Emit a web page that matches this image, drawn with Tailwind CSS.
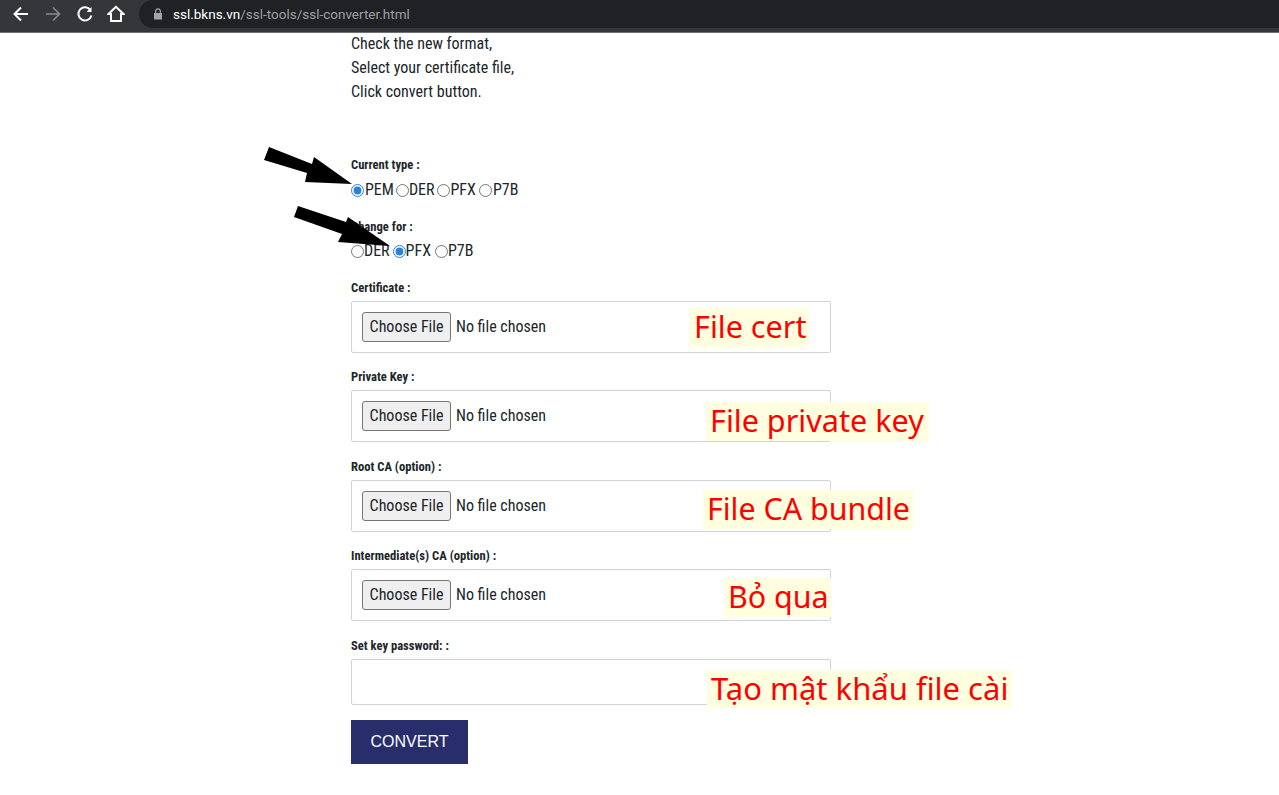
<!DOCTYPE html>
<html lang="en">
<head>
  <meta charset="UTF-8" />
  <title>SSL Converter</title>
  <script src="https://cdn.jsdelivr.net/npm/@tailwindcss/browser@4"></script>
</head>
<body class="relative h-[795px] overflow-hidden bg-white font-['Roboto',sans-serif] text-[#212529]">

  <!-- Browser toolbar -->
  <header class="flex h-[33px] items-start border-b border-[#6f7072] bg-[#35363a]">
    <div class="flex h-[28px] w-[139px] items-center">
      <svg class="ml-[12px] h-[18px] w-[18px]" viewBox="0 0 18 18" fill="none" stroke="#fff" stroke-width="2"><path d="M16 9H3M9 2.5L2.5 9L9 15.5"/></svg>
      <svg class="ml-[14px] h-[18px] w-[18px]" viewBox="0 0 18 18" fill="none" stroke="#8a8b8d" stroke-width="1.6"><path d="M2 9H15M9 2.5L15.5 9L9 15.5"/></svg>
      <svg class="ml-[14px] h-[18px] w-[18px]" viewBox="0 0 18 18" fill="none" stroke="#fff" stroke-width="2"><path d="M14.5 5.2A6.6 6.6 0 1 0 15.4 10.5"/><path d="M15.5 2V7H10.5" fill="#fff" stroke="none"/></svg>
      <svg class="ml-[13px] h-[18px] w-[18px]" viewBox="0 0 18 18" fill="none" stroke="#fff" stroke-width="2"><path d="M9 1.8L1.5 9H4V16H14V9H16.5Z" stroke-linejoin="miter"/></svg>
    </div>
    <div class="flex h-[28px] flex-1 items-center rounded-l-[14px] bg-[#202124] pl-[14px]">
      <svg class="h-[12px] w-[10px]" viewBox="0 0 10 12" fill="#a3a4a6"><path d="M1 5H9V11.5H1Z"/><path d="M2.7 5V3.2A2.3 2.3 0 0 1 7.3 3.2V5" fill="none" stroke="#a3a4a6" stroke-width="1.2"/></svg>
      <span class="ml-[10px] text-[13.5px] text-white">ssl.bkns.vn<span class="text-[#9aa0a6]">/ssl-tools/ssl-converter.html</span></span>
    </div>
  </header>

  <main class="-mt-[1px] pl-[351px] font-stretch-condensed">
    <div class="text-[16px] leading-[24px]">
      <p>Check the new format,</p>
      <p>Select your certificate file,</p>
      <p>Click convert button.</p>
    </div>

    <div class="mt-[52px] h-[18px] text-[12.6px] font-bold leading-[18px]">Current type :</div>
    <div class="mt-[4px] flex h-[24px] items-center text-[16px]">
      <input type="radio" name="current" checked class="mr-[1px] h-[13px] w-[13px] accent-[#2a83d6]" /><span class="mr-[2px]">PEM</span>
      <input type="radio" name="current" class="h-[13px] w-[13px]" /><span class="mr-[3px]">DER</span>
      <input type="radio" name="current" class="h-[13px] w-[13px]" /><span class="mr-[3px]">PFX</span>
      <input type="radio" name="current" class="mr-[1px] h-[13px] w-[13px]" /><span>P7B</span>
    </div>

    <div class="mt-[16px] h-[18px] text-[12.6px] font-bold leading-[18px]">Change for :</div>
    <div class="mt-[3px] flex h-[24px] items-center text-[16px]">
      <input type="radio" name="change" class="h-[13px] w-[13px]" /><span class="mr-[3px]">DER</span>
      <input type="radio" name="change" checked class="h-[13px] w-[13px] accent-[#2a83d6]" /><span class="mr-[4px]">PFX</span>
      <input type="radio" name="change" class="h-[13px] w-[13px]" /><span>P7B</span>
    </div>

    <!-- File fields -->
    <div class="mt-[16px] h-[89.4px]">
      <div class="h-[18px] text-[12.6px] font-bold leading-[18px]">Certificate :</div>
      <div class="mt-[4px] flex h-[52px] w-[480px] items-center rounded-[2px] border border-[#ced4da] pl-[10px] text-[16px]">
        <button class="h-[30px] w-[89px] rounded-[3px] border border-[#767676] bg-[#efefef]">Choose File</button><span class="ml-[5px]">No file chosen</span>
      </div>
    </div>
    <div class="h-[89.4px]">
      <div class="h-[18px] text-[12.6px] font-bold leading-[18px]">Private Key :</div>
      <div class="mt-[4px] flex h-[52px] w-[480px] items-center rounded-[2px] border border-[#ced4da] pl-[10px] text-[16px]">
        <button class="h-[30px] w-[89px] rounded-[3px] border border-[#767676] bg-[#efefef]">Choose File</button><span class="ml-[5px]">No file chosen</span>
      </div>
    </div>
    <div class="h-[89.4px]">
      <div class="h-[18px] text-[12.6px] font-bold leading-[18px]">Root CA (option) :</div>
      <div class="mt-[4px] flex h-[52px] w-[480px] items-center rounded-[2px] border border-[#ced4da] pl-[10px] text-[16px]">
        <button class="h-[30px] w-[89px] rounded-[3px] border border-[#767676] bg-[#efefef]">Choose File</button><span class="ml-[5px]">No file chosen</span>
      </div>
    </div>
    <div class="h-[89.4px]">
      <div class="h-[18px] text-[12.6px] font-bold leading-[18px]">Intermediate(s) CA (option) :</div>
      <div class="mt-[4px] flex h-[52px] w-[480px] items-center rounded-[2px] border border-[#ced4da] pl-[10px] text-[16px]">
        <button class="h-[30px] w-[89px] rounded-[3px] border border-[#767676] bg-[#efefef]">Choose File</button><span class="ml-[5px]">No file chosen</span>
      </div>
    </div>
    <div>
      <div class="h-[18px] text-[12.6px] font-bold leading-[18px]">Set key password: :</div>
      <input type="password" class="mt-[4px] block h-[46px] w-[480px] rounded-[2px] border border-[#ced4da]" />
    </div>
    <button class="mt-[15px] h-[44px] w-[117px] bg-[#272e6b] font-['Liberation_Sans',sans-serif] text-[16px] text-white">CONVERT</button>
  </main>

  <!-- Annotations drawn over the screenshot -->
  <span class="absolute left-[689px] top-[308px] h-[39px] w-[120px] bg-[#ffffe0] pl-[5px] font-['Noto_Sans',sans-serif] text-[30.6px] leading-[37px] text-[#ff0000]">File cert</span>
  <span class="absolute left-[706px] top-[402px] h-[39px] w-[223px] bg-[#ffffe0] pl-[4px] font-['Noto_Sans',sans-serif] text-[30.6px] leading-[37px] text-[#ff0000]">File private key</span>
  <span class="absolute left-[703px] top-[490px] h-[39px] w-[210px] bg-[#ffffe0] pl-[4px] font-['Noto_Sans',sans-serif] text-[30.4px] leading-[37px] text-[#ff0000]">File CA bundle</span>
  <span class="absolute left-[724px] top-[578px] h-[39px] w-[107px] bg-[#ffffe0] pl-[4px] font-['Noto_Sans',sans-serif] text-[30.4px] leading-[37px] text-[#ff0000]">Bỏ qua</span>
  <span class="absolute left-[707px] top-[670px] h-[38px] w-[305px] bg-[#ffffe0] pl-[4px] font-['Noto_Sans',sans-serif] text-[31px] leading-[37px] text-[#ff0000]">Tạo mật khẩu file cài</span>

  <svg class="pointer-events-none absolute left-0 top-0 h-[795px] w-[1279px]" viewBox="0 0 1279 795">
    <path d="M269 147L312 164L314 157L352 184L305 182L307 173L264 160Z" fill="#000"/>
    <path d="M298 206L346 222L348 217L390 246L338 242L342 234L294 217Z" fill="#000"/>
  </svg>
</body>
</html>
